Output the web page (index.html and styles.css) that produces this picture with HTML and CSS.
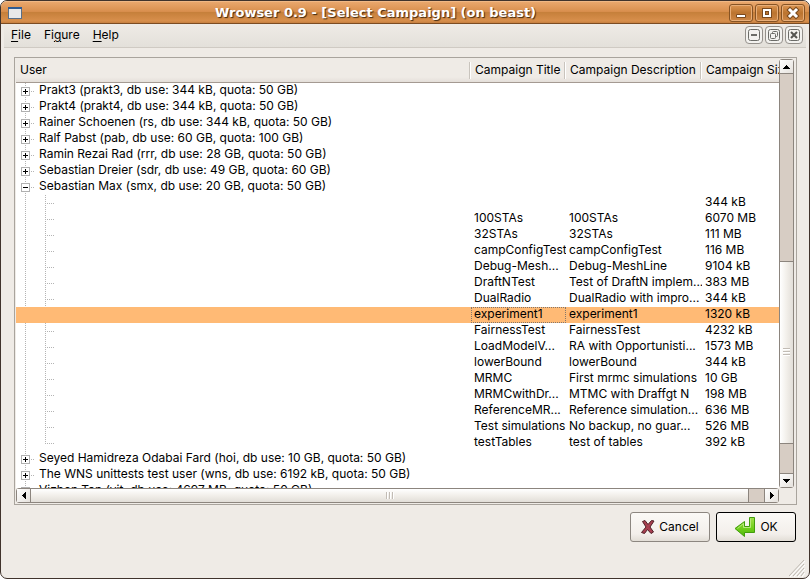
FILE: index.html
```html
<!DOCTYPE html>
<html lang="en">
<head>
<meta charset="utf-8">
<title>Wrowser 0.9 - [Select Campaign] (on beast)</title>
<link rel="stylesheet" href="styles.css">
</head>
<body>
<div class="window">
  <header class="titlebar">
    <svg class="app-icon" width="14" height="12" viewBox="0 0 14 12" aria-hidden="true"><path fill="#5a6f88" d="M0 0h14v12H0z"/><path fill="#2f5b92" d="M0 0h14v2H0z"/><path fill="#e9e9e9" d="M1 2h12v9H1z"/></svg>
    <h1>Wrowser 0.9 - [Select Campaign] (on beast)</h1>
    <div class="window-controls">
      <button type="button" aria-label="Minimize"><svg width="22" height="16" viewBox="0 0 22 16"><path fill="#fff" stroke="#7b4a1e" d="M6.500 9.500h9v3h-9z"/></svg></button>
      <button type="button" aria-label="Maximize"><svg width="22" height="16" viewBox="0 0 22 16"><path fill="none" stroke="#7b4a1e" stroke-width="4" d="M8 5h6v6H8z"/><path fill="none" stroke="#fff" stroke-width="2" d="M8 5h6v6H8z"/></svg></button>
      <button type="button" aria-label="Close"><svg width="22" height="16" viewBox="0 0 22 16"><path fill="none" stroke="#7b4a1e" stroke-width="5" stroke-linecap="square" d="m8 5 6 6m0-6-6 6"/><path fill="none" stroke="#fff" stroke-width="3" stroke-linecap="square" d="m8 5 6 6m0-6-6 6"/></svg></button>
    </div>
  </header>
  <nav class="menubar">
    <button type="button"><u>F</u>ile</button>
    <button type="button">Fi<u>g</u>ure</button>
    <button type="button"><u>H</u>elp</button>
    <div class="child-controls">
      <button type="button" aria-label="Minimize campaign window"><svg width="12" height="12" viewBox="0 0 12 12"><rect x=".5" y=".5" width="11" height="11" rx="2" fill="none" stroke="#6c6c68"/><path fill="#6c6c68" d="M3 5h6v2H3z"/></svg></button>
      <button type="button" aria-label="Restore campaign window"><svg width="12" height="12" viewBox="0 0 12 12"><g fill="none" stroke="#6c6c68"><rect x=".5" y=".5" width="11" height="11" rx="2"/><rect x="4.500" y="2.500" width="5" height="5" rx="1"/><rect x="2.500" y="4.500" width="5" height="5" rx="1" fill="#f3f2ef"/></g></svg></button>
      <button type="button" aria-label="Close campaign window"><svg width="12" height="12" viewBox="0 0 12 12"><rect x=".5" y=".5" width="11" height="11" rx="2" fill="none" stroke="#6c6c68"/><path fill="none" stroke="#555551" stroke-width="2" d="m3 3 6 6m0-6-6 6"/></svg></button>
    </div>
  </nav>
  <main>
    <section class="frame">
      <div class="list">
        <table>
          <colgroup><col><col class="col-title"><col class="col-description"><col class="col-size"></colgroup>
          <thead><tr><th>User</th><th>Campaign Title</th><th>Campaign Description</th><th>Campaign Size</th></tr></thead>
          <tbody>
            <tr class="user"><td colspan="4"><button type="button" aria-label="Expand"></button>Prakt3 (prakt3, db use: 344 kB, quota: 50 GB)</td></tr>
            <tr class="user"><td colspan="4"><button type="button" aria-label="Expand"></button>Prakt4 (prakt4, db use: 344 kB, quota: 50 GB)</td></tr>
            <tr class="user"><td colspan="4"><button type="button" aria-label="Expand"></button>Rainer Schoenen (rs, db use: 344 kB, quota: 50 GB)</td></tr>
            <tr class="user"><td colspan="4"><button type="button" aria-label="Expand"></button>Ralf Pabst (pab, db use: 60 GB, quota: 100 GB)</td></tr>
            <tr class="user"><td colspan="4"><button type="button" aria-label="Expand"></button>Ramin Rezai Rad (rrr, db use: 28 GB, quota: 50 GB)</td></tr>
            <tr class="user"><td colspan="4"><button type="button" aria-label="Expand"></button>Sebastian Dreier (sdr, db use: 49 GB, quota: 60 GB)</td></tr>
            <tr class="user"><td colspan="4"><button type="button" class="open" aria-label="Collapse"></button>Sebastian Max (smx, db use: 20 GB, quota: 50 GB)</td></tr>
            <tr class="campaign"><td></td><td></td><td></td><td>344 kB</td></tr>
            <tr class="campaign"><td></td><td>100STAs</td><td>100STAs</td><td>6070 MB</td></tr>
            <tr class="campaign"><td></td><td>32STAs</td><td>32STAs</td><td>111 MB</td></tr>
            <tr class="campaign"><td></td><td>campConfigTest</td><td>campConfigTest</td><td>116 MB</td></tr>
            <tr class="campaign"><td></td><td>Debug-Mesh...</td><td>Debug-MeshLine</td><td>9104 kB</td></tr>
            <tr class="campaign"><td></td><td>DraftNTest</td><td>Test of DraftN implem...</td><td>383 MB</td></tr>
            <tr class="campaign"><td></td><td>DualRadio</td><td>DualRadio with impro...</td><td>344 kB</td></tr>
            <tr class="campaign selected"><td></td><td class="current">experiment1</td><td>experiment1</td><td>1320 kB</td></tr>
            <tr class="campaign"><td></td><td>FairnessTest</td><td>FairnessTest</td><td>4232 kB</td></tr>
            <tr class="campaign"><td></td><td>LoadModelV...</td><td>RA with Opportunisti...</td><td>1573 MB</td></tr>
            <tr class="campaign"><td></td><td>lowerBound</td><td>lowerBound</td><td>344 kB</td></tr>
            <tr class="campaign"><td></td><td>MRMC</td><td>First mrmc simulations</td><td>10 GB</td></tr>
            <tr class="campaign"><td></td><td>MRMCwithDr...</td><td>MTMC with Draffgt N</td><td>198 MB</td></tr>
            <tr class="campaign"><td></td><td>ReferenceMR...</td><td>Reference simulation...</td><td>636 MB</td></tr>
            <tr class="campaign"><td></td><td>Test simulations</td><td>No backup, no guar...</td><td>526 MB</td></tr>
            <tr class="campaign last"><td></td><td>testTables</td><td>test of tables</td><td>392 kB</td></tr>
            <tr class="user"><td colspan="4"><button type="button" aria-label="Expand"></button>Seyed Hamidreza Odabai Fard (hoi, db use: 10 GB, quota: 50 GB)</td></tr>
            <tr class="user"><td colspan="4"><button type="button" aria-label="Expand"></button>The WNS unittests test user (wns, db use: 6192 kB, quota: 50 GB)</td></tr>
            <tr class="user"><td colspan="4"><button type="button" aria-label="Expand"></button>Vizhen Tan (vit, db use: 4697 MB, quota: 50 GB)</td></tr>
          </tbody>
        </table>
      </div>
      <div class="scroll vertical">
        <button type="button" aria-label="Scroll up"><svg width="7" height="4" viewBox="0 0 7 4"><path d="M3 0h1v1h1v1h1v1h1v1H0V3h1V2h1V1h1z"/></svg></button>
        <div class="before"></div><div class="thumb"></div><div class="after"></div>
        <button type="button" aria-label="Scroll down"><svg width="7" height="4" viewBox="0 0 7 4"><path d="M0 0h7v1H6v1H5v1H4v1H3V3H2V2H1V1H0z"/></svg></button>
      </div>
      <div class="scroll horizontal">
        <button type="button" aria-label="Scroll left"><svg width="4" height="7" viewBox="0 0 4 7"><path d="M4 0v7H3V6H2V5H1V4H0V3h1V2h1V1h1V0z"/></svg></button>
        <div class="thumb"></div><div class="after"></div>
        <button type="button" aria-label="Scroll right"><svg width="4" height="7" viewBox="0 0 4 7"><path d="M0 0v7h1V6h1V5h1V4h1V3H3V2H2V1H1V0z"/></svg></button>
      </div>
    </section>
    <footer>
      <button type="button"><svg width="14" height="16" viewBox="0 0 14 16" aria-hidden="true"><path fill="#a83f50" stroke="#4f2027" d="M1.500 2.500 4 1.500 7 5.500l3.500-4 2.500.500-4 6 3.500 5-2.500 1.500L6.500 10.500 3.500 14.500.500 13.500 5 8z"/></svg>Cancel</button>
      <button type="button" class="default"><svg width="22" height="22" viewBox="0 0 22 22" aria-hidden="true"><defs><linearGradient id="go" x2="0" y2="1"><stop stop-color="#a2e04c"/><stop offset=".55" stop-color="#72cf1c"/><stop offset="1" stop-color="#4fb808"/></linearGradient></defs><path fill="url(#go)" stroke="#429d0c" stroke-linejoin="round" d="M15.500 1.500h5v15h-10v4l-9.500-8 9.500-7v5h5z"/><path fill="none" stroke="#b8ea7c" d="M16.500 2.500v9h-7v-4l-6 5"/></svg>OK</button>
    </footer>
    <svg class="grip" width="16" height="17" viewBox="0 0 16 17" aria-hidden="true"><g fill="none" stroke="#fff"><path d="M1 17 16 1M5 17 16 5M9 17 16 9M13 17l3-4"/></g><g fill="none" stroke="#bdb8b0"><path d="M0 16 15 0M4 16 15 4M8 16l7-8M12 16l3-4"/></g></svg>
  </main>
</div>
</body>
</html>
```
FILE: styles.css
```css
* { box-sizing: border-box; }
body { margin: 0; background: #fff; color: #000; font: 12px/16px Inter, "Liberation Sans", sans-serif; }
button { margin: 0; padding: 0; border: 0; background: none; color: inherit; font: inherit; }
h1 { margin: 0; }

.window {
  display: flex; flex-direction: column; height: 100vh; overflow: hidden;
  border: 1px solid #40332c; border-radius: 7px; background: #efebe6;
}

.titlebar {
  flex: none; display: flex; align-items: center; height: 23px; padding: 0 4px 0 7px;
  border-top: 1px solid #f0b885; border-bottom: 1px solid #7c4c22;
  background: linear-gradient(#e9a76c, #d98f4e 45%, #c6803b 50%, #d88f4c 90%, #c57f3f);
}
.titlebar h1 {
  flex: 1; text-align: center; color: #fff;
  font: bold 13px/20px "DejaVu Sans", sans-serif; text-shadow: 1px 1px 1px #402810;
}
.window-controls { display: flex; gap: 2px; }
.window-controls button {
  height: 18px; border: 1px solid #865324; border-radius: 3px;
  background: linear-gradient(#dc9552, #bb742f 50%, #ce8847); box-shadow: inset 0 0 0 1px #e8ae78;
}
.window-controls svg, .child-controls svg { display: block; }

.menubar {
  flex: none; display: flex; align-items: center; gap: 13px; height: 24px;
  margin: 0 3px; padding: 0 3px 1px 7px; border-bottom: 1px solid #cfcac3;
  background: linear-gradient(#efebe6, #e3e0da);
}
.menubar u { text-underline-offset: 2px; }
.child-controls { display: flex; gap: 2px; margin-left: auto; }
.child-controls button {
  padding: 2px; border: 1px solid #94908b; border-radius: 4px; background: #f3f2ef;
}

main { flex: 1; display: flex; flex-direction: column; min-height: 0; padding: 9px 12px 0 13px; }

.frame {
  flex: 1; min-height: 0; display: grid; grid-template-columns: 1fr 15px; grid-template-rows: 1fr 15px;
  padding: 0 2px 1px 1px; border: 1px solid #a9a49d;
}
.list {
  overflow: hidden; min-width: 0; min-height: 0;
  background: linear-gradient(#efebe6 25px, #fff 25px);
}
table { width: 100%; table-layout: fixed; border-collapse: separate; border-spacing: 0; }
.col-title { width: 95px; }
.col-description { width: 136px; }
.col-size { width: 77px; }
th {
  height: 25px; padding: 0 4px; overflow: hidden; white-space: nowrap;
  text-align: left; font-weight: normal; border-bottom: 1px solid #a49a92;
  background: linear-gradient(#c9c4bd, #c9c4bd) right 1px top 4px / 1px 17px no-repeat,
    linear-gradient(#fff, #fff) right 0 top 4px / 1px 17px no-repeat,
    linear-gradient(#efebe6 80%, #e4dfd9);
}
th:last-child { background: linear-gradient(#efebe6 80%, #e4dfd9); }
td { height: 16px; padding: 0 3px; overflow: hidden; white-space: nowrap; line-height: 14px; vertical-align: top; }

.user td {
  background:
    repeating-linear-gradient(#b4b4b4 0 1px, transparent 1px 2px) 9px 0 / 1px 100% no-repeat,
    repeating-linear-gradient(90deg, #b4b4b4 0 1px, transparent 1px 2px) 15px 8px / 4px 1px no-repeat;
}
.user button {
  float: left; width: 9px; height: 9px; margin: 4px 9px 0 2px; border: 1px solid #b0b0b0;
  background:
    linear-gradient(#000, #000) center / 5px 1px no-repeat,
    linear-gradient(#000, #000) center / 1px 5px no-repeat, #fff;
}
.user .open { background: linear-gradient(#000, #000) center / 5px 1px no-repeat, #fff; }

.campaign td:first-child {
  background:
    repeating-linear-gradient(#b4b4b4 0 1px, transparent 1px 2px) 9px 0 / 1px 100% no-repeat,
    repeating-linear-gradient(#b4b4b4 0 1px, transparent 1px 2px) 29px 0 / 1px 100% no-repeat,
    repeating-linear-gradient(90deg, #b4b4b4 0 1px, transparent 1px 2px) 29px 8px / 9px 1px no-repeat;
}
.campaign.last td:first-child {
  background-size: 1px 100%, 1px 8px, 9px 1px;
}
.campaign.selected td, .campaign.selected td:first-child { background: #ffba75; }
.selected .current { outline: 1px dotted #84766a; outline-offset: -1px; }

.scroll { display: flex; background: #d7cdc4; border: 1px solid #8c857e; }
.scroll button {
  flex: none; display: flex; align-items: center; justify-content: center;
  background: linear-gradient(135deg, #fff, #e5e1dc);
}
.thumb { display: flex; align-items: center; justify-content: center; }
.thumb::before { content: ""; }
.vertical { flex-direction: column; margin-top: 1px; border-radius: 3px; }
.vertical button { height: 14px; }
.vertical button:first-child, .vertical .thumb { border-bottom: 1px solid #8c857e; }
.vertical button:last-child, .vertical .thumb { border-top: 1px solid #8c857e; }
.vertical .before { flex: 188; }
.vertical .thumb { flex: 183; background: linear-gradient(90deg, #fff, #f2efea 50%, #e2ded8); }
.vertical .after { flex: 29; }
.vertical .thumb::before { width: 7px; height: 8px; background: repeating-linear-gradient(#c2bcb5 0 1px, #fff 1px 2px, transparent 2px 3px); }
.horizontal { border-radius: 3px; }
.horizontal button { width: 14px; }
.horizontal button:first-child, .horizontal .thumb { border-right: 1px solid #8c857e; }
.horizontal button:last-child { border-left: 1px solid #8c857e; }
.horizontal .thumb { flex: 718; background: linear-gradient(#fff, #f2efea 50%, #e2ded8); }
.horizontal .after { flex: 15; }
.horizontal .thumb::before { width: 8px; height: 7px; background: repeating-linear-gradient(90deg, #c2bcb5 0 1px, #fff 1px 2px, transparent 2px 3px); }

footer { flex: none; display: flex; justify-content: flex-end; gap: 6px; padding: 7px 1px 0 0; }
footer button {
  display: flex; align-items: center; justify-content: center; gap: 4px; width: 80px; height: 30px;
  border: 1px solid #8c8680; border-radius: 3px;
  background: linear-gradient(#fbf9f6, #f3efeb 75%, #e2ddd6);
}
footer .default { border-color: #000; }

.grip { flex: none; align-self: flex-end; margin: 18px -8px 1px 0; }
```
